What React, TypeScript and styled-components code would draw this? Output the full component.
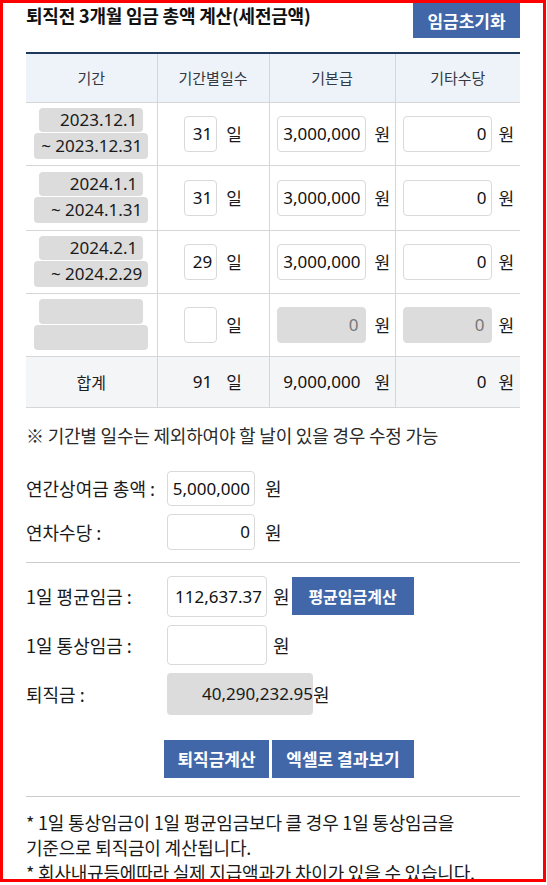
import React from 'react';
import styled, { createGlobalStyle, css } from 'styled-components';

const GlobalStyle = createGlobalStyle`
  html, body {
    margin: 0;
    padding: 0;
    background: #ffffff;
  }
  body {
    font-family: "Noto Sans CJK KR", "Noto Sans", sans-serif;
    color: #1e1e1e;
  }
  * {
    box-sizing: border-box;
  }
`;

const NUM_FONT = `"Noto Sans", "Noto Sans CJK KR", sans-serif`;

const Frame = styled.div`
  position: fixed;
  left: 0;
  top: 0;
  width: 546px;
  height: 882px;
  border: 3px solid #ff0000;
  pointer-events: none;
  z-index: 10;
`;

const Page = styled.div`
  width: 547px;
  height: 885px;
  overflow: hidden;
  padding: 0 27px 0 26px;
`;

const HeaderBar = styled.div`
  display: flex;
  justify-content: space-between;
  align-items: flex-start;
  height: 38px;
`;

const Title = styled.h2`
  margin: 0;
  padding-top: 2px;
  font-size: 18px;
  line-height: 26px;
  font-weight: 700;
  color: #111;
  letter-spacing: -0.2px;
`;

const BlueButton = styled.button<{ $w: number; $h?: number; $size?: number }>`
  width: ${(p) => p.$w}px;
  height: ${(p) => p.$h ?? 38}px;
  padding: 0;
  border: none;
  background: #4267a9;
  color: #ffffff;
  font-family: "Noto Sans CJK KR", sans-serif;
  font-size: ${(p) => p.$size ?? 17}px;
  font-weight: 700;
  cursor: pointer;
`;

const ResetButton = styled(BlueButton)`
  margin-top: 2px;
`;

const Table = styled.table`
  margin-top: 14px;
  width: 494px;
  table-layout: fixed;
  border-collapse: collapse;
  border-top: 2px solid #1b3a5e;
`;

const Th = styled.th`
  height: 49px;
  padding: 0;
  background: #eef3fa;
  color: #333842;
  font-size: 15px;
  font-weight: 400;
  border-bottom: 1px solid #d6d6d6;
  & + & {
    border-left: 1px solid #d6d6d6;
  }
`;

const Tr = styled.tr<{ $h: number; $sum?: boolean }>`
  height: ${(p) => p.$h}px;
  ${(p) =>
    p.$sum &&
    css`
      background: #f4f5f7;
      border-top: 1px solid #1b3a5e;
    `}
`;

const Td = styled.td`
  padding: 0;
  border-bottom: 1px solid #d6d6d6;
  vertical-align: middle;
  & + & {
    border-left: 1px solid #d6d6d6;
  }
`;

const Cell = styled.div<{ $center?: boolean }>`
  display: flex;
  align-items: center;
  justify-content: ${(p) => (p.$center ? 'center' : 'flex-start')};
  padding: ${(p) => (p.$center ? '0' : '0 0 0 7px')};
`;

const DateStack = styled.div`
  display: flex;
  flex-direction: column;
  align-items: center;
  gap: 1px;
`;

const DateBox = styled.div<{ $w: number; $h: number }>`
  width: ${(p) => p.$w}px;
  height: ${(p) => p.$h}px;
  padding-right: 6px;
  border-radius: 4px;
  background: #dcdcdc;
  font-family: ${NUM_FONT};
  font-size: 17px;
  line-height: ${(p) => p.$h}px;
  text-align: right;
  color: #1a1a1a;
`;

const NumInput = styled.input<{ $w: number; $h?: number; $gray?: boolean }>`
  width: ${(p) => p.$w}px;
  height: ${(p) => p.$h ?? 36}px;
  margin: 0;
  padding: 0 4px 0 2px;
  border: 1px solid #d9d9d9;
  border-radius: 4px;
  background: #ffffff;
  font-family: ${NUM_FONT};
  font-size: 17px;
  color: #111;
  text-align: right;
  outline: none;
  ${(p) =>
    p.$gray &&
    css`
      padding-right: 6px;
      border-color: #dcdcdc;
      background: #dcdcdc;
      color: #777;
    `}
`;

const SumValue = styled.div<{ $w: number }>`
  width: ${(p) => p.$w}px;
  padding-right: 5px;
  font-family: ${NUM_FONT};
  font-size: 17px;
  text-align: right;
  color: #111;
`;

const Unit = styled.span<{ $gap?: number; $size?: number }>`
  margin-left: ${(p) => p.$gap ?? 8}px;
  font-size: ${(p) => p.$size ?? 17}px;
  color: #1a1a1a;
`;

const SumLabel = styled.div`
  text-align: center;
  font-size: 16px;
`;

const Note = styled.p`
  margin: 16px 0 0;
  font-size: 18px;
  line-height: 22px;
  letter-spacing: -0.2px;
  color: #2a2a2a;
`;

const FormGroup = styled.div<{ $top: number; $gap: number }>`
  display: flex;
  flex-direction: column;
  gap: ${(p) => p.$gap}px;
  margin-top: ${(p) => p.$top}px;
`;

const FormRow = styled.div`
  display: flex;
  align-items: center;
`;

const Label = styled.div`
  width: 141px;
  font-size: 18px;
  color: #1a1a1a;
`;

const Divider = styled.div<{ $top: number }>`
  height: 1px;
  background: #cccccc;
  margin-top: ${(p) => p.$top}px;
`;

const ResultBox = styled.div`
  width: 146px;
  height: 42px;
  border-radius: 4px;
  background: #dcdcdc;
  font-family: ${NUM_FONT};
  font-size: 17px;
  line-height: 42px;
  text-align: right;
  color: #1a1a1a;
`;

const ActionRow = styled.div`
  display: flex;
  gap: 3px;
  margin-top: 25px;
  padding-left: 138px;
`;

const Footer = styled.div`
  margin-top: 13px;
  font-size: 18px;
  line-height: 25px;
  letter-spacing: -0.2px;
  color: #1a1a1a;
`;

type Row = {
  from: string;
  to: string;
  days: string;
  base: string;
  other: string;
  h: number;
  empty?: boolean;
};

const rows: Row[] = [
  { from: '2023.12.1', to: '~ 2023.12.31', days: '31', base: '3,000,000', other: '0', h: 63 },
  { from: '2024.1.1', to: '~ 2024.1.31', days: '31', base: '3,000,000', other: '0', h: 65 },
  { from: '2024.2.1', to: '~ 2024.2.29', days: '29', base: '3,000,000', other: '0', h: 63 },
  { from: '', to: '', days: '', base: '0', other: '0', h: 63, empty: true },
];

const App: React.FC = () => {
  return (
    <>
      <GlobalStyle />
      <Frame />
      <Page>
        <HeaderBar>
          <Title>퇴직전 3개월 임금 총액 계산(세전금액)</Title>
          <ResetButton $w={107} $h={36}>임금초기화</ResetButton>
        </HeaderBar>

        <Table>
          <colgroup>
            <col style={{ width: 131 }} />
            <col style={{ width: 112 }} />
            <col style={{ width: 126 }} />
            <col style={{ width: 125 }} />
          </colgroup>
          <thead>
            <tr>
              <Th>기간</Th>
              <Th>기간별일수</Th>
              <Th>기본급</Th>
              <Th>기타수당</Th>
            </tr>
          </thead>
          <tbody>
            {rows.map((r, i) => (
              <Tr key={i} $h={r.h}>
                <Td>
                  <DateStack>
                    <DateBox $w={104} $h={r.empty ? 25 : 24}>{r.from}</DateBox>
                    <DateBox $w={114} $h={r.empty ? 25 : 26}>{r.to}</DateBox>
                  </DateStack>
                </Td>
                <Td>
                  <Cell $center>
                    <NumInput $w={33} defaultValue={r.days} />
                    <Unit $gap={9}>일</Unit>
                  </Cell>
                </Td>
                <Td>
                  <Cell>
                    <NumInput $w={89} $gray={r.empty} defaultValue={r.base} />
                    <Unit $gap={9}>원</Unit>
                  </Cell>
                </Td>
                <Td>
                  <Cell>
                    <NumInput $w={89} $gray={r.empty} defaultValue={r.other} />
                    <Unit $gap={7}>원</Unit>
                  </Cell>
                </Td>
              </Tr>
            ))}
            <Tr $h={51} $sum>
              <Td>
                <SumLabel>합계</SumLabel>
              </Td>
              <Td>
                <Cell $center>
                  <SumValue $w={33}>91</SumValue>
                  <Unit $gap={9}>일</Unit>
                </Cell>
              </Td>
              <Td>
                <Cell>
                  <SumValue $w={89}>9,000,000</SumValue>
                  <Unit $gap={9}>원</Unit>
                </Cell>
              </Td>
              <Td>
                <Cell>
                  <SumValue $w={89}>0</SumValue>
                  <Unit $gap={7}>원</Unit>
                </Cell>
              </Td>
            </Tr>
          </tbody>
        </Table>

        <Note>※ 기간별 일수는 제외하여야 할 날이 있을 경우 수정 가능</Note>

        <FormGroup $top={25} $gap={8}>
          <FormRow>
            <Label>연간상여금 총액 :</Label>
            <NumInput $w={88} $h={35} defaultValue="5,000,000" />
            <Unit $gap={10} $size={18}>원</Unit>
          </FormRow>
          <FormRow>
            <Label>연차수당 :</Label>
            <NumInput $w={88} defaultValue="0" />
            <Unit $gap={10} $size={18}>원</Unit>
          </FormRow>
        </FormGroup>

        <Divider $top={12} />

        <FormGroup $top={13} $gap={8}>
          <FormRow>
            <Label>1일 평균임금 :</Label>
            <NumInput $w={100} $h={41} defaultValue="112,637.37" />
            <Unit $gap={6} $size={18}>원</Unit>
            <BlueButton $w={122} $size={16} style={{ marginLeft: 2 }}>
              평균임금계산
            </BlueButton>
          </FormRow>
          <FormRow>
            <Label>1일 통상임금 :</Label>
            <NumInput $w={100} $h={40} defaultValue="" />
            <Unit $gap={6} $size={18}>원</Unit>
          </FormRow>
          <FormRow>
            <Label>퇴직금 :</Label>
            <ResultBox>40,290,232.95</ResultBox>
            <Unit $gap={0} $size={18}>원</Unit>
          </FormRow>
        </FormGroup>

        <ActionRow>
          <BlueButton $w={105}>퇴직금계산</BlueButton>
          <BlueButton $w={142}>엑셀로 결과보기</BlueButton>
        </ActionRow>

        <Divider $top={18} />

        <Footer>
          * 1일 통상임금이 1일 평균임금보다 클 경우 1일 통상임금을
          <br />
          기준으로 퇴직금이 계산됩니다.
          <br />* 회사내규등에따라 실제 지급액과가 차이가 있을 수 있습니다.
        </Footer>
      </Page>
    </>
  );
};

export default App;
